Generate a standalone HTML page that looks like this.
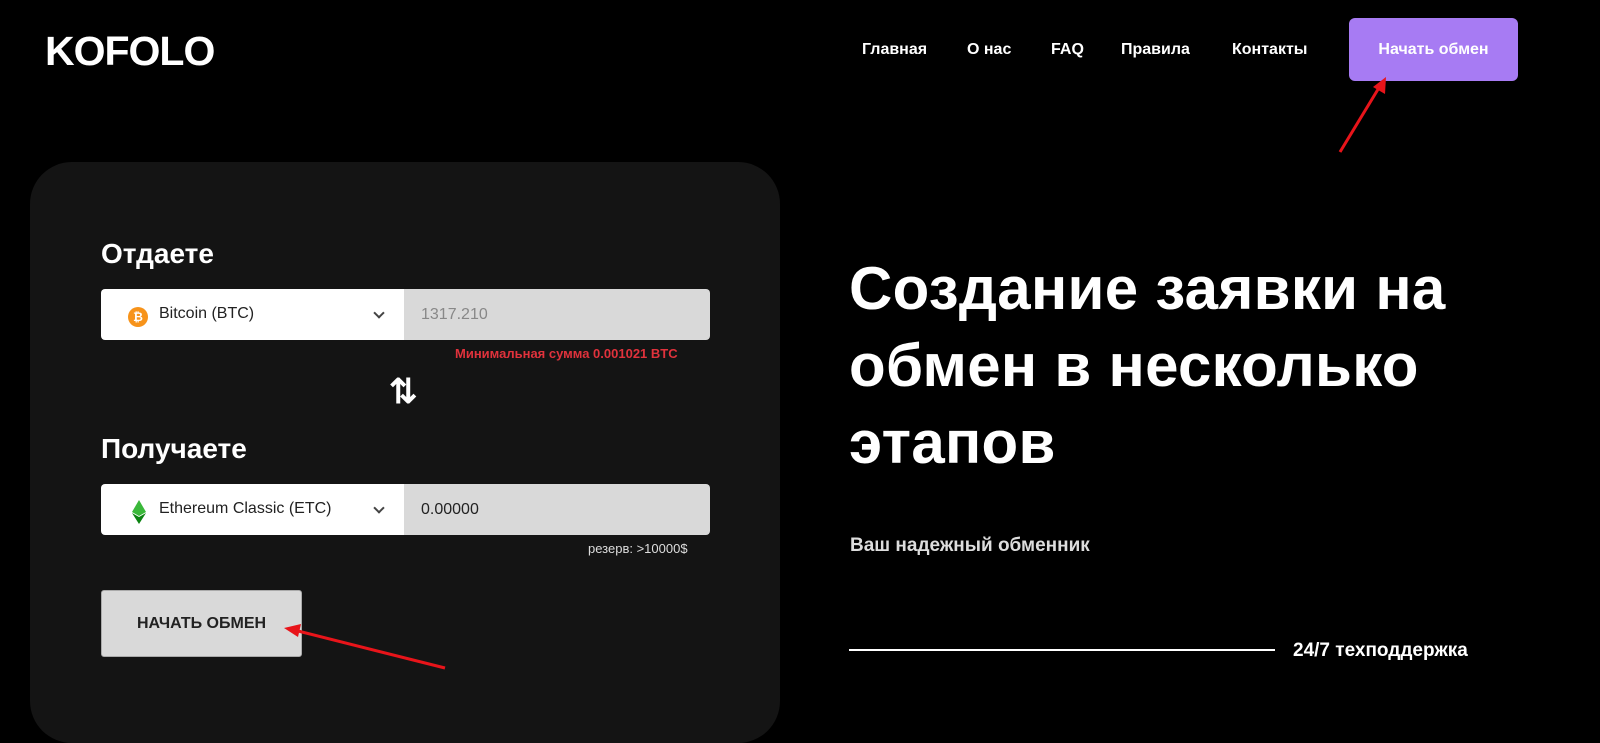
<!DOCTYPE html>
<html><head><meta charset="utf-8"><style>
*{margin:0;padding:0;box-sizing:border-box}
html{width:1600px;height:743px;overflow:hidden;background:#000}
body{width:1600px;height:743px;background:#000;overflow:hidden;position:relative;font-family:"Liberation Sans",sans-serif;color:#fff}
.abs{position:absolute}
.logo{left:45px;top:28px;font-size:41px;font-weight:bold;letter-spacing:-1px}
.nav a{position:absolute;top:41px;font-size:16px;font-weight:bold;color:#fff;text-decoration:none}
.btn{left:1349px;top:18px;width:169px;height:63px;background:#a77bf3;border-radius:6px;font-size:16px;font-weight:bold;line-height:63px;text-align:center}
.card{left:30px;top:162px;width:750px;height:581px;background:#141414;border-radius:42px}
.lbl{font-size:28px;font-weight:bold}
.sel{left:101px;width:303px;height:51px;background:#fff;border-radius:4px 0 0 4px;color:#222;font-size:16px}
.inp{left:404px;width:306px;height:51px;background:#d9d9d9;border-radius:0 4px 4px 0;font-size:16px;padding-left:17px;line-height:51px}
.chev{position:absolute;left:274px;top:20px;width:8px;height:8px;border-right:2px solid #444;border-bottom:2px solid #444;transform:rotate(45deg)}
h1{position:absolute;left:849px;top:250px;font-size:60px;line-height:77px;font-weight:bold;letter-spacing:0.3px}
</style></head><body>
<div class="abs logo">KOFOLO</div>
<div class="nav">
<a style="left:862px">Главная</a><a style="left:967px">О нас</a><a style="left:1051px">FAQ</a><a style="left:1121px">Правила</a><a style="left:1232px">Контакты</a>
</div>
<div class="abs btn">Начать обмен</div>
<div class="abs card"></div>
<div class="abs lbl" style="left:101px;top:238px">Отдаете</div>
<div class="abs sel" style="top:289px"><div class="abs" style="left:27px;top:18px;width:20px;height:20px;border-radius:50%;background:#f7931a;color:#fff;font-size:12px;font-weight:bold;text-align:center;line-height:20px">₿</div><div class="abs" style="left:58px;top:16px">Bitcoin (BTC)</div><div class="chev"></div></div>
<div class="abs inp" style="top:289px;color:#888">1317.210</div>
<div class="abs" style="left:455px;top:346px;font-size:13px;font-weight:bold;color:#e0323c">Минимальная сумма 0.001021 BTC</div>
<div class="abs" style="left:389px;top:372px;font-size:34px;font-weight:bold">⇅</div>
<div class="abs lbl" style="left:101px;top:433px">Получаете</div>
<div class="abs sel" style="top:484px"><svg class="abs" style="left:31px;top:16px" width="14" height="24" viewBox="0 0 14 24"><path d="M7 0L14 12L7 16L0 12Z" fill="#3ab83a"/><path d="M7 17L14 13L7 24L0 13Z" fill="#0b8311"/></svg><div class="abs" style="left:58px;top:16px">Ethereum Classic (ETC)</div><div class="chev"></div></div>
<div class="abs inp" style="top:484px;color:#222">0.00000</div>
<div class="abs" style="left:588px;top:541px;font-size:13px;color:#ddd">резерв: &gt;10000$</div>
<div class="abs" style="left:101px;top:590px;width:201px;height:67px;background:#d9d9d9;border-radius:3px;border:1px solid #aaa;color:#222;font-size:16px;font-weight:bold;line-height:65px;text-align:center">НАЧАТЬ ОБМЕН</div>
<h1>Создание заявки на<br>обмен в несколько<br>этапов</h1>
<div class="abs" style="left:850px;top:535px;font-size:19px;font-weight:bold;color:#ddd">Ваш надежный обменник</div>
<div class="abs" style="left:849px;top:649px;width:426px;height:2px;background:#fff"></div>
<div class="abs" style="left:1293px;top:640px;font-size:19px;font-weight:bold">24/7 техподдержка</div>
<svg class="abs" style="left:0;top:0" width="1600" height="743">
<line x1="1340" y1="152" x2="1380" y2="86" stroke="#e8141a" stroke-width="3"/>
<path d="M1386 77L1385 94L1373 87Z" fill="#e8141a"/>
<line x1="445" y1="668" x2="298" y2="631" stroke="#e8141a" stroke-width="3"/>
<path d="M284 628L301 624L298 637Z" fill="#e8141a"/>
</svg>
</body></html>
